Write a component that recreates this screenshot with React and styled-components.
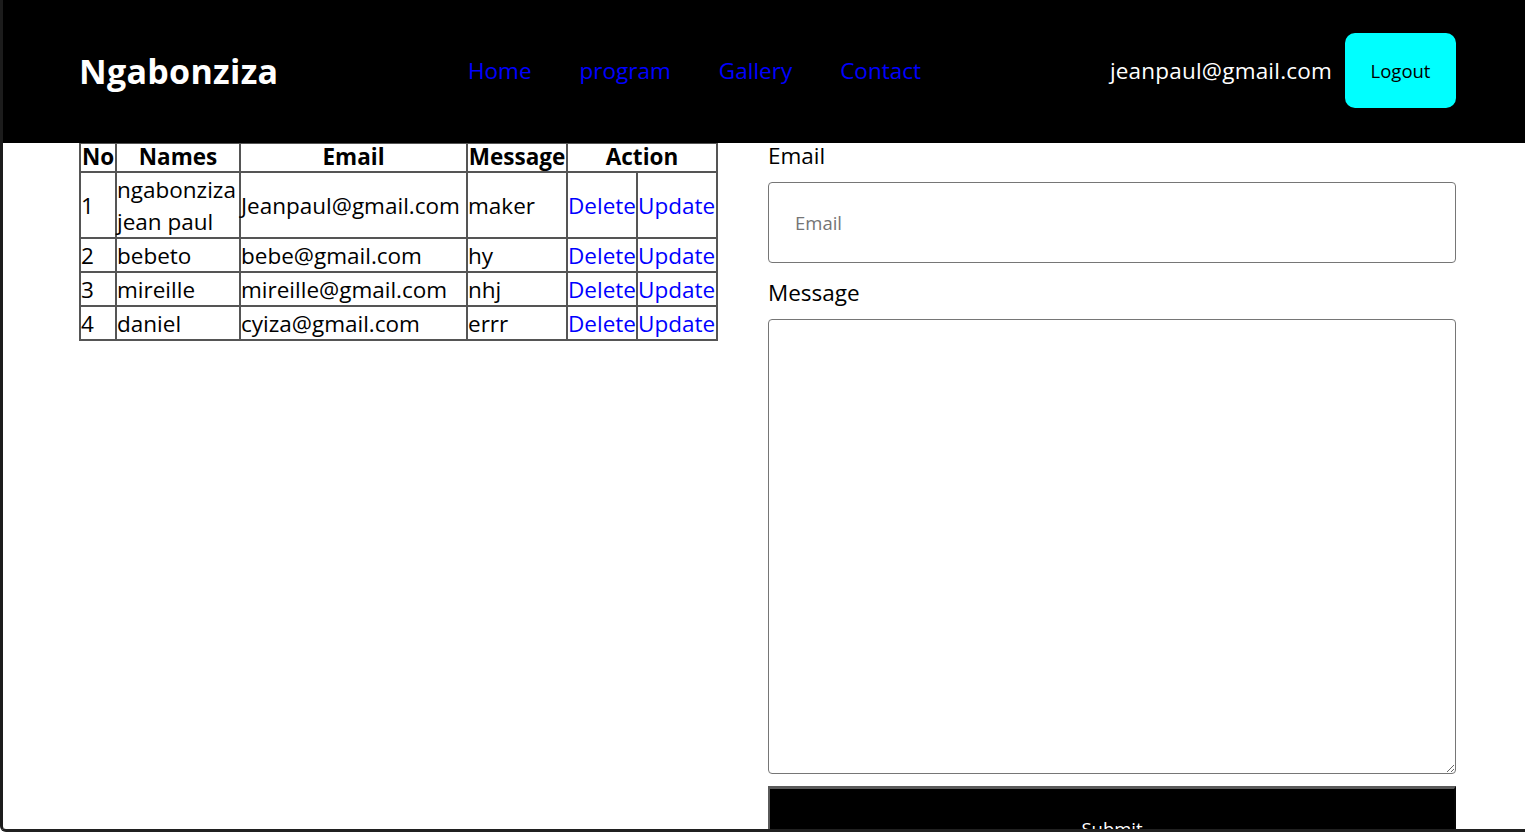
import React from "react";
import styled, { createGlobalStyle } from "styled-components";

const GlobalStyle = createGlobalStyle`
  * { box-sizing: border-box; }
  html, body { margin: 0; padding: 0; height: 100%; overflow: hidden; }
  body {
    font-family: "Open Sans", "Noto Sans", "Liberation Sans", sans-serif;
    color: #000;
    background: #fff;
  }
`;

const rows = [
  { no: 1, name: "ngabonziza jean paul", email: "Jeanpaul@gmail.com", message: "maker" },
  { no: 2, name: "bebeto", email: "bebe@gmail.com", message: "hy" },
  { no: 3, name: "mireille", email: "mireille@gmail.com", message: "nhj" },
  { no: 4, name: "daniel", email: "cyiza@gmail.com", message: "errr" },
];

export default function App() {
  return (
    <Frame>
      <GlobalStyle />
      <Header>
        <Brand>Ngabonziza</Brand>
        <Nav>
          <a href="#home">Home</a>
          <a href="#program">program</a>
          <a href="#gallery">Gallery</a>
          <a href="#contact">Contact</a>
        </Nav>
        <User>
          <span>jeanpaul@gmail.com</span>
          <LogoutButton>Logout</LogoutButton>
        </User>
      </Header>
      <Main>
        <Table>
          <colgroup>
            <col style={{ width: 36 }} />
            <col style={{ width: 124 }} />
            <col style={{ width: 227 }} />
            <col style={{ width: 100 }} />
            <col style={{ width: 70 }} />
            <col style={{ width: 80 }} />
          </colgroup>
          <thead>
            <tr>
              <th>No</th>
              <th>Names</th>
              <th>Email</th>
              <th>Message</th>
              <th colSpan={2}>Action</th>
            </tr>
          </thead>
          <tbody>
            {rows.map((r) => (
              <tr key={r.no}>
                <td><Cell>{r.no}</Cell></td>
                <td><Cell>{r.name}</Cell></td>
                <td><Cell>{r.email}</Cell></td>
                <td><Cell>{r.message}</Cell></td>
                <td><ActionLink href="#delete">Delete</ActionLink></td>
                <td><ActionLink href="#update">Update</ActionLink></td>
              </tr>
            ))}
          </tbody>
        </Table>
        <Form onSubmit={(e) => e.preventDefault()}>
          <Label htmlFor="email">Email</Label>
          <Input id="email" type="email" placeholder="Email" />
          <Label htmlFor="message" $second>Message</Label>
          <TextArea id="message" />
          <SubmitButton type="submit">Submit</SubmitButton>
        </Form>
      </Main>
    </Frame>
  );
}

const Frame = styled.div`
  height: 100vh;
  border-left: 3px solid #1c1c1c;
  border-bottom: 3px solid #202020;
  border-bottom-left-radius: 6px;
  overflow: hidden;
  position: relative;
`;

const Header = styled.header`
  position: fixed;
  top: 0;
  left: 3px;
  right: 0;
  height: 143px;
  background: #000;
  display: flex;
  align-items: center;
  padding: 0 69px 0 76px;
  z-index: 10;
`;

const Brand = styled.h1`
  margin: 0 0 2px;
  color: #fff;
  font-size: 34px;
  font-weight: 700;
  width: 389px;
  letter-spacing: 0.3px;
`;

const Nav = styled.nav`
  display: flex;
  gap: 48px;
  flex: 1;
  a {
    color: #0000ff;
    text-decoration: none;
    font-size: 22.5px;
    margin-bottom: 2px;
  }
`;

const User = styled.div`
  display: flex;
  align-items: center;
  gap: 13px;
  color: #fff;
  font-size: 22.5px;
  letter-spacing: 0.2px;
  margin-top: -3px;
`;

const LogoutButton = styled.button`
  width: 111px;
  height: 75px;
  border: none;
  border-radius: 10px;
  background: #00ffff;
  color: #000;
  font-family: inherit;
  font-size: 18.5px;
  letter-spacing: 0;
  cursor: pointer;
`;

const Main = styled.main`
  display: grid;
  grid-template-columns: 637px 1fr;
  gap: 52px;
  align-items: start;
  padding: 142px 69px 0 76px;
`;

const Table = styled.table`
  width: 637px;
  table-layout: fixed;
  border-collapse: collapse;
  border: 2px solid #555;
  font-size: 22.5px;
  line-height: 32px;
  th, td {
    border: 2px solid #555;
    padding: 0;
    text-align: left;
    vertical-align: middle;
  }
  th {
    text-align: center;
    font-weight: 700;
    line-height: 26px;
    padding-bottom: 1px;
  }
  td {
    white-space: nowrap;
  }
  td:nth-child(2) {
    white-space: normal;
  }
`;

const Cell = styled.span`
  position: relative;
  top: 1px;
`;

const ActionLink = styled.a`
  position: relative;
  top: 1px;
  color: #0000ff;
  text-decoration: none;
`;

const Form = styled.form`
  display: flex;
  flex-direction: column;
`;

const Label = styled.label`
  font-size: 22.5px;
  line-height: ${(p) => (p.$second ? 32 : 28)}px;
  margin-top: ${(p) => (p.$second ? 14 : 0)}px;
  margin-bottom: ${(p) => (p.$second ? 10 : 12)}px;
`;

const Input = styled.input`
  height: 81px;
  border: 1px solid #767676;
  border-radius: 4px;
  padding: 0 26px;
  font-family: inherit;
  font-size: 18.5px;
  &::placeholder {
    color: #757575;
  }
`;

const TextArea = styled.textarea`
  height: 455px;
  border: 1px solid #767676;
  border-radius: 4px;
  font-family: inherit;
  font-size: 18.5px;
  margin-bottom: 12px;
`;

const SubmitButton = styled.button`
  background: #000;
  color: #fff;
  border: 2px outset #5a5a5a;
  border-top-width: 3px;
  padding: 27px 0;
  font-family: inherit;
  font-size: 18.5px;
  cursor: pointer;
`;
